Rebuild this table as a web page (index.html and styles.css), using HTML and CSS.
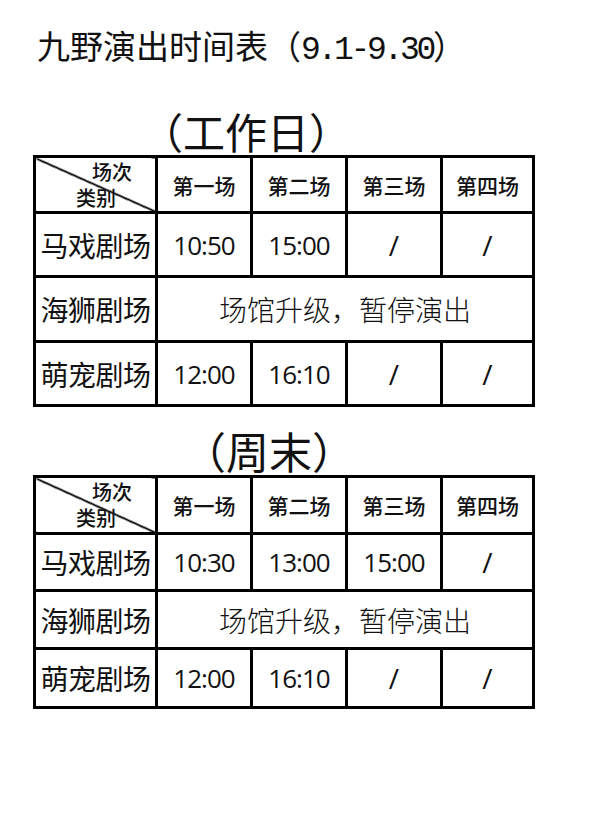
FILE: index.html
```html
<!DOCTYPE html>
<html lang="zh-CN">
<head>
<meta charset="utf-8">
<title>九野演出时间表</title>
<link rel="stylesheet" href="styles.css">
</head>
<body>
<div class="page">
  <h1 class="title">九野演出时间表（<span class="num">9.1-9.30</span>）</h1>

  <h2 class="section section-weekday">（工作日）</h2>
  <table class="sched">
    <colgroup>
      <col class="c-label"><col class="c-a"><col class="c-b"><col class="c-c"><col class="c-d">
    </colgroup>
    <tr class="r-head">
      <th class="corner"><span class="top">场次</span><span class="bot">类别</span></th>
      <th>第一场</th><th>第二场</th><th>第三场</th><th>第四场</th>
    </tr>
    <tr class="r1">
      <td class="label">马戏剧场</td><td class="time">10:50</td><td class="time">15:00</td><td class="slash">/</td><td class="slash">/</td>
    </tr>
    <tr class="r2">
      <td class="label">海狮剧场</td><td class="note" colspan="4">场馆升级，暂停演出</td>
    </tr>
    <tr class="r3">
      <td class="label">萌宠剧场</td><td class="time">12:00</td><td class="time">16:10</td><td class="slash">/</td><td class="slash">/</td>
    </tr>
  </table>

  <h2 class="section section-weekend">（周末）</h2>
  <table class="sched sched-2">
    <colgroup>
      <col class="c-label"><col class="c-a"><col class="c-b"><col class="c-c"><col class="c-d">
    </colgroup>
    <tr class="r-head">
      <th class="corner"><span class="top">场次</span><span class="bot">类别</span></th>
      <th>第一场</th><th>第二场</th><th>第三场</th><th>第四场</th>
    </tr>
    <tr class="r1">
      <td class="label">马戏剧场</td><td class="time">10:30</td><td class="time">13:00</td><td class="time">15:00</td><td class="slash">/</td>
    </tr>
    <tr class="r2">
      <td class="label">海狮剧场</td><td class="note" colspan="4">场馆升级，暂停演出</td>
    </tr>
    <tr class="r3">
      <td class="label">萌宠剧场</td><td class="time">12:00</td><td class="time">16:10</td><td class="slash">/</td><td class="slash">/</td>
    </tr>
  </table>
</div>
</body>
</html>
```

FILE: styles.css
```css
html, body {
  margin: 0;
  padding: 0;
  background: #fff;
}

body {
  font-family: "Noto Sans CJK SC", "Noto Sans", sans-serif;
  color: #111;
}

.page {
  width: 598px;
  height: 823px;
  padding-top: 25px;
  box-sizing: border-box;
}

.title {
  margin: 0 0 0 37px;
  font-size: 33px;
  font-weight: 400;
  line-height: 40px;
  letter-spacing: 0;
}

.title .num {
  font-family: "Liberation Mono", monospace;
  letter-spacing: -0.1em;
}

.section {
  margin: 0;
  font-size: 42px;
  font-weight: 400;
  line-height: 48px;
}

.section-weekday {
  margin-top: 36px;
  padding-left: 141px;
}

.section-weekend {
  margin-top: 18px;
  padding-left: 183px;
  font-size: 43px;
  line-height: 50px;
}

.sched {
  margin-left: 33px;
  border-collapse: collapse;
  table-layout: fixed;
  width: 502px;
  border: 3px solid #000;
}

.sched th,
.sched td {
  border: 3px solid #000;
  padding: 0;
  text-align: center;
  vertical-align: middle;
}

.c-label { width: 122px; }
.c-a { width: 95px; }
.c-b { width: 95px; }
.c-c { width: 95px; }
.c-d { width: 92px; }

.sched th {
  font-size: 21px;
  font-weight: 500;
  height: 53px;
}

.r1 td { height: 61px; }
.r2 td { height: 62px; }
.r3 td { height: 61px; }

.sched-2 .r-head th { height: 54px; }
.sched-2 .r1 td { height: 54px; }
.sched-2 .r2 td { height: 55px; }
.sched-2 .r3 td { height: 56px; }

.corner {
  background: linear-gradient(to top right, transparent calc(50% - 1.2px), #000 calc(50% - 1px), #000 calc(50% + 0.6px), transparent calc(50% + 0.9px));
  text-align: left !important;
}

.corner .top,
.corner .bot {
  display: block;
  font-size: 20px;
  line-height: 24px;
}

.corner .top { margin-left: 56px; }
.corner .bot { margin-left: 40px; margin-top: 2px; }

.label {
  font-size: 28px;
  letter-spacing: -0.5px;
}

.time {
  font-family: "Open Sans", "Noto Sans", sans-serif;
  font-size: 26px;
  letter-spacing: -1px;
}

.slash {
  font-family: "Open Sans", "Noto Sans", sans-serif;
  font-size: 28px;
}

.note {
  font-size: 28px;
  font-weight: 300;
}
```
